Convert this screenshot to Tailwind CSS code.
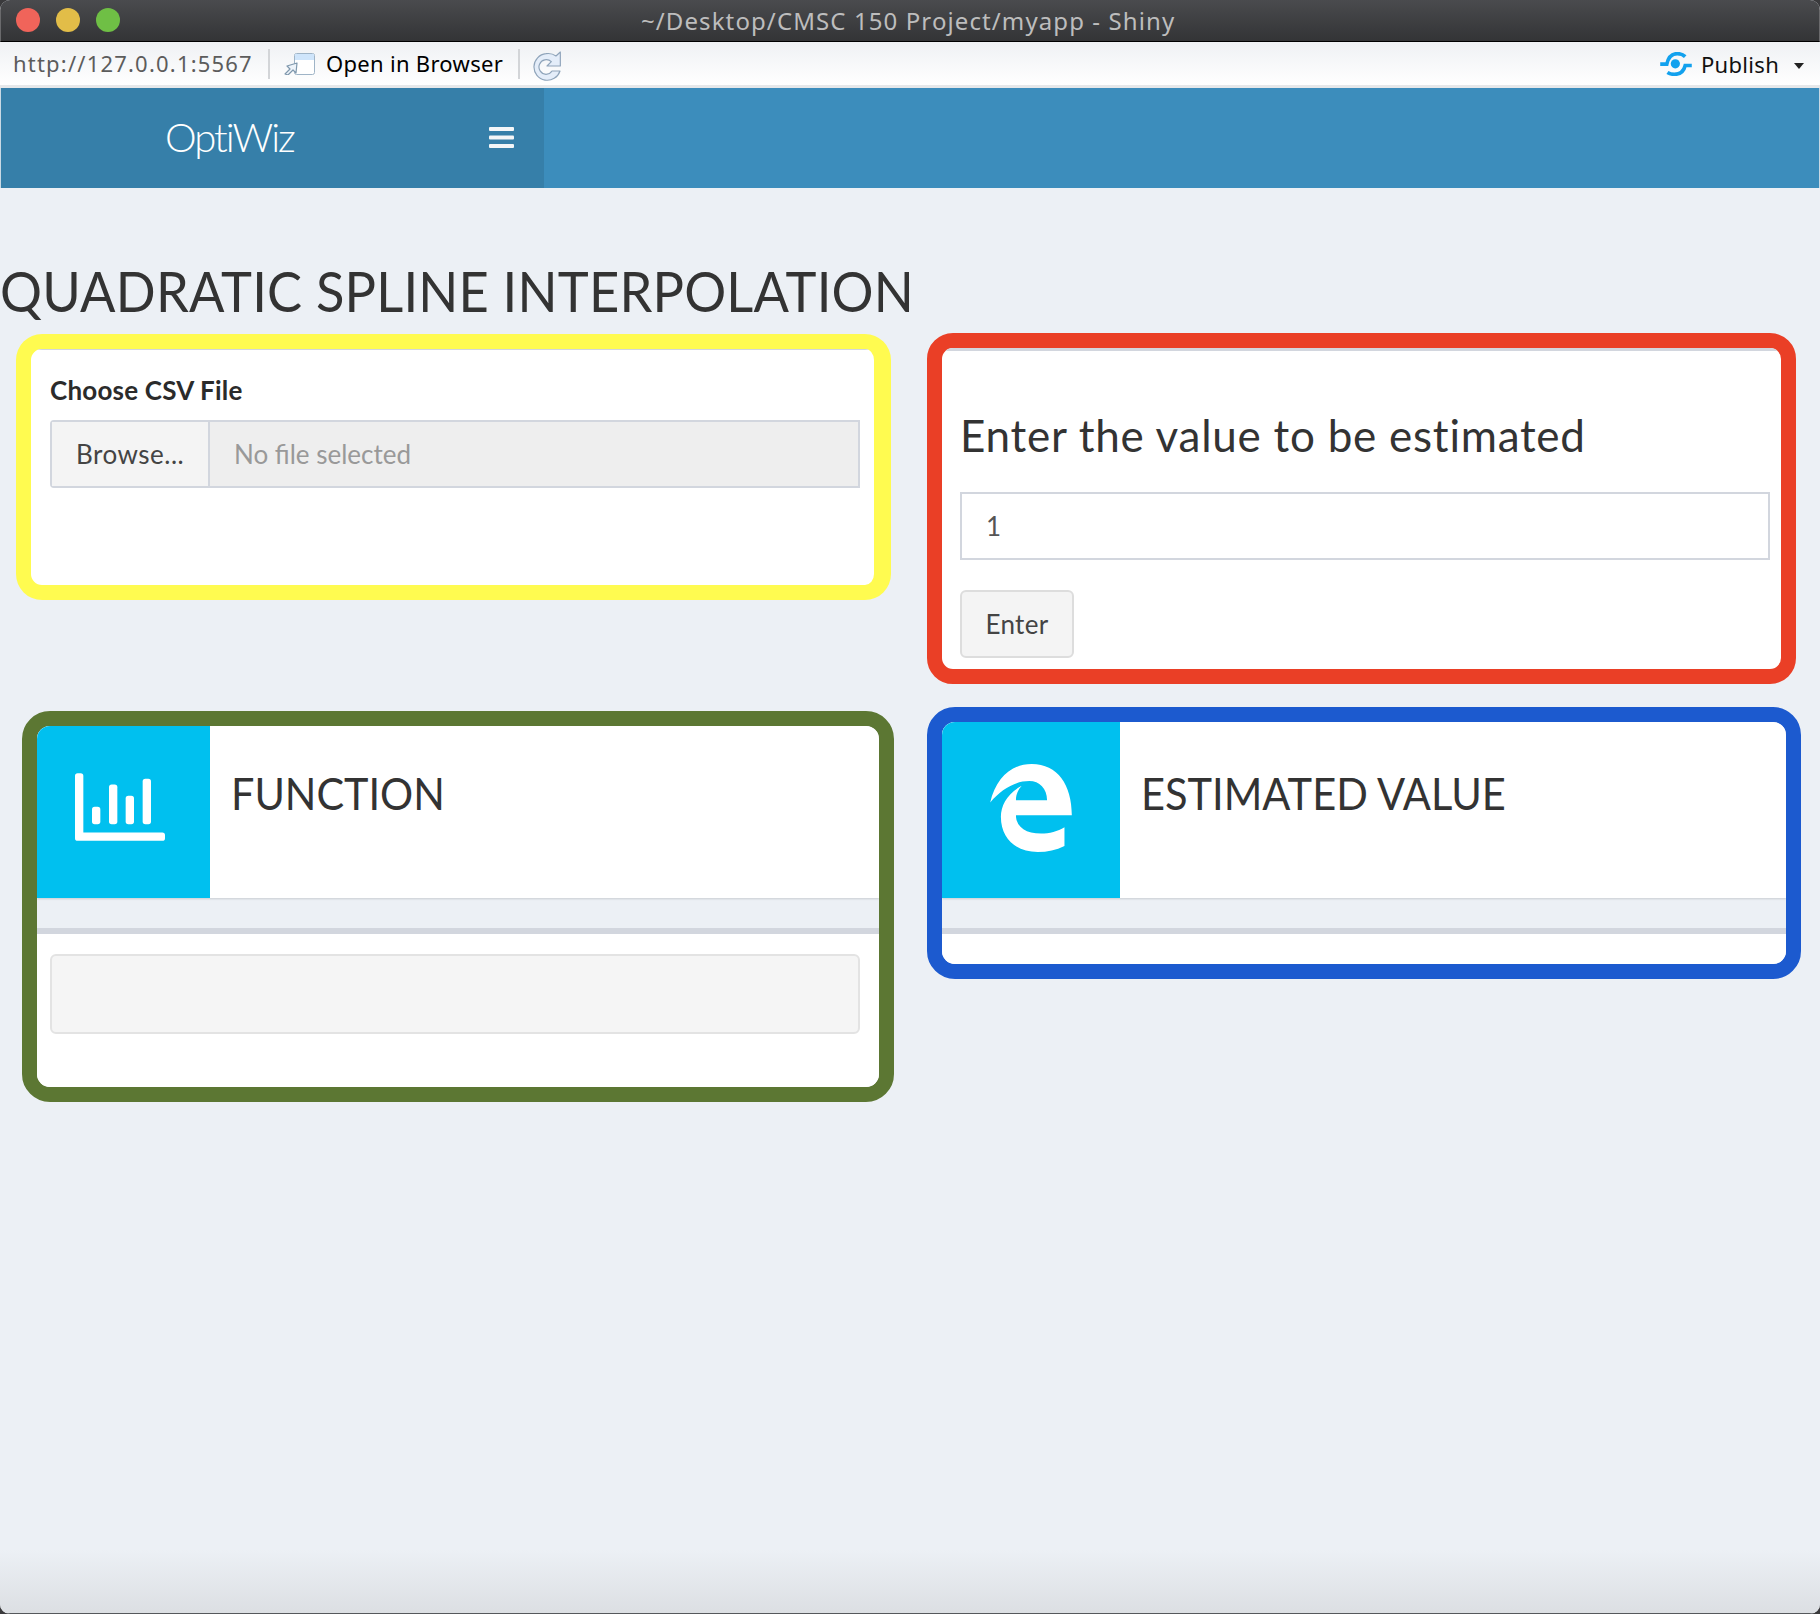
<!DOCTYPE html>
<html lang="en">
<head>
  <meta charset="UTF-8" />
  <title>~/Desktop/CMSC 150 Project/myapp - Shiny</title>
  <script src="https://cdn.jsdelivr.net/npm/@tailwindcss/browser@4"></script>
</head>
<body class="bg-[#3a3a3c] overflow-hidden">
  <div class="w-[1820px] h-[1614px] flex flex-col rounded-[10px] overflow-hidden bg-[#ecf0f5] font-['Lato',sans-serif] text-[#333]">

    <!-- window title bar -->
    <div class="h-[42px] shrink-0 flex items-center relative bg-gradient-to-b from-[#4a4b4e] to-[#333436] border-b border-b-black border-x border-x-[#6a6a6c]">
      <div class="flex gap-[16px] pl-[15px] mt-[-1px]">
        <span class="w-[24px] h-[24px] rounded-full bg-[#f0645a]"></span>
        <span class="w-[24px] h-[24px] rounded-full bg-[#e2bd48]"></span>
        <span class="w-[24px] h-[24px] rounded-full bg-[#6fbf45]"></span>
      </div>
      <div class="absolute left-[640px] top-[5px] font-['Noto_Sans',sans-serif] text-[24px] leading-[32px] tracking-[1.1px] text-[#bdbdbd] whitespace-nowrap">~/Desktop/CMSC 150 Project/myapp - Shiny</div>
    </div>

    <!-- toolbar -->
    <div class="h-[46px] shrink-0 flex items-center bg-gradient-to-b from-[#eff1f4] to-white border-b-[3px] border-[#e6e8ea] font-['Noto_Sans',sans-serif] text-[22px]">
      <span class="ml-[13px] w-[255px] text-[#5c5c5c] tracking-[1.2px] whitespace-nowrap">http://127.0.0.1:5567</span>
      <span class="w-[2px] h-[30px] bg-[#d3d5d8]"></span>
      <svg class="ml-[14px] w-[31px] h-[22px]" viewBox="0 0 31 22">
        <rect x="10.5" y="0.5" width="20" height="21" rx="2" fill="#fff" stroke="#9fb4c7"/>
        <path d="M11 1h19v6H11z" fill="#cfe5fb"/>
        <path d="M1 21l5-5-3-3 10-3-1 10-3-3-5 5z" fill="#eef4fa" stroke="#7f98ad" stroke-width="1.2" stroke-linejoin="round"/>
      </svg>
      <span class="ml-[11px] w-[192px] text-black tracking-[0.3px] whitespace-nowrap">Open in Browser</span>
      <span class="w-[2px] h-[30px] bg-[#d3d5d8]"></span>
      <svg class="ml-[12px] mt-[5px] w-[30px] h-[30px]" viewBox="0 0 90 90">
        <path d="M85 3V45H45L58 32A22 22 0 1 0 42 70A22 22 0 0 0 60 60H84A40 40 0 1 1 42 8A40 40 0 0 1 72 15Z" fill="#e4edf9" stroke="#8fa4ba" stroke-width="3.500" stroke-linejoin="round"/>
      </svg>
      <svg class="ml-[1098px] w-[32px] h-[24px]" viewBox="780 162 96 73" fill="none" stroke="#12a1ee" stroke-width="11">
        <path d="M780 199H800C804 180 815 167 832 167C842 167 850 170 856 176"/>
        <path d="M876 203H856C852 220 840 230 823 230C815 230 808 228 802 224"/>
        <circle cx="826" cy="198" r="14" fill="#12a1ee" stroke="none"/>
      </svg>
      <span class="ml-[9px] mt-[2px] w-[75px] text-[#111] tracking-[0.3px]">Publish</span>
      <span class="ml-[18px] w-0 h-0 border-x-[5px] border-x-transparent border-t-[6px] border-t-[#222] mt-[5px]"></span>
    </div>

    <!-- app header -->
    <header class="h-[100px] shrink-0 flex bg-[#3c8dbc] border-x border-[#c9d9e4]">
      <div class="w-[543px] flex items-center bg-[#367fa9] text-white">
        <span class="ml-[164px] mb-[2px] w-[324px] text-[40px] font-light tracking-[-2px]">OptiWiz</span>
        <svg class="w-[25px] h-[21px] mb-[2px]" viewBox="0 0 25 21" fill="#f3f6f8">
          <rect width="25" height="4" rx="1"/><rect y="8.500" width="25" height="4" rx="1"/><rect y="17" width="25" height="4" rx="1"/>
        </svg>
      </div>
    </header>

    <main class="flex-1 relative">
      <div class="h-[146px] pt-[71px]">
        <h1 class="origin-left scale-x-[0.937] text-[56px] leading-[64px] whitespace-nowrap tracking-[0.2px]">QUADRATIC SPLINE INTERPOLATION</h1>
      </div>

      <div class="flex">
        <!-- left column -->
        <div class="w-[927px] shrink-0">
          <section class="ml-[16px] w-[875px] h-[266px] border-[15px] border-r-[17px] border-[#fffb50] rounded-[26px] overflow-hidden bg-white">
            <div class="h-full border-t-[1px] border-[#d2d6de] pt-[28px] pl-[19px]">
              <label class="block text-[26px] leading-[24px] tracking-[0.2px] font-bold text-[#2b2b2b]">Choose CSV File</label>
              <div class="mt-[18px] w-[810px] h-[68px] flex border-2 border-[#d2d6de] rounded-l-[4px] text-[26px]">
                <span class="w-[158px] flex items-center pl-[24px] bg-[#f4f4f4] border-r-2 border-[#d2d6de] text-[#444] tracking-[0.5px]">Browse...</span>
                <span class="flex-1 flex items-center pl-[24px] bg-[#eeeeee] text-[#999]">No file selected</span>
              </div>
            </div>
          </section>

          <section class="mt-[111px] ml-[22px] w-[872px] h-[391px] border-[15px] border-[#5c7733] rounded-[28px] overflow-hidden bg-[#ecf0f5]">
            <div class="h-[172px] flex bg-white shadow-[0_1px_2px_rgba(0,0,0,0.15)]">
              <div class="w-[173px] flex items-center justify-center bg-[#00c0ef]">
                <svg class="w-[90px] h-[68px] mb-[11px] mr-[7px]" viewBox="225 217 270 203" fill="#fff">
                  <path d="M225 225a8 8 0 0 1 8-8h9a8 8 0 0 1 8 8v170h237a8 8 0 0 1 8 8v9a8 8 0 0 1-8 8H233a8 8 0 0 1-8-8z"/>
                  <rect x="276" y="318" width="25" height="52" rx="8"/>
                  <rect x="327" y="251" width="25" height="119" rx="8"/>
                  <rect x="377" y="285" width="25" height="85" rx="8"/>
                  <rect x="428" y="234" width="25" height="136" rx="8"/>
                </svg>
              </div>
              <h2 class="ml-[21px] mt-[45px] origin-left scale-x-[0.94] text-[44px] leading-[44px] h-[44px] whitespace-nowrap">FUNCTION</h2>
            </div>
            <div class="h-[30px]"></div>
            <div class="h-[6px] bg-[#d2d6de]"></div>
            <div class="bg-white h-[153px] pl-[13px] pt-[20px]">
              <div class="w-[810px] h-[80px] bg-[#f5f5f5] border-2 border-[#e3e3e3] rounded-[6px]"></div>
            </div>
          </section>
        </div>

        <!-- right column -->
        <div class="flex-1">
          <section class="-mt-px w-[869px] h-[351px] border-[15px] border-[#ea3f26] rounded-[26px] overflow-hidden bg-white">
            <div class="h-full border-t-[3px] border-[#d2d6de] pl-[18px]">
              <h3 class="mt-[62px] text-[44px] leading-[44px] tracking-[0.75px] whitespace-nowrap">Enter the value to be estimated</h3>
              <div class="mt-[35px] w-[810px] h-[68px] flex items-center pl-[24px] border-2 border-[#d2d6de] text-[26px] text-[#555]">1</div>
              <button class="mt-[30px] w-[114px] h-[68px] bg-[#f4f4f4] border-2 border-[#ddd] rounded-[6px] text-[26px] tracking-[0.3px] text-[#444]">Enter</button>
            </div>
          </section>

          <section class="mt-[23px] w-[874px] h-[272px] border-[15px] border-[#1c5acf] rounded-[28px] overflow-hidden bg-[#ecf0f5]">
            <div class="h-[176px] flex bg-white shadow-[0_1px_2px_rgba(0,0,0,0.15)]">
              <div class="w-[178px] flex items-center justify-center bg-[#00c0ef]">
                <svg class="w-[82px] h-[88px] mb-[4px] mr-[1px]" viewBox="268 217 244 263" fill="#fff">
                  <path d="M268 332C285 260 330 217 392 217C470 217 512 280 512 370H345C345 405 375 425 420 425C445 425 470 418 490 406V462C465 474 440 480 410 480C345 480 300 440 300 375C300 340 320 305 362 282C350 295 345 310 345 325H438C438 290 415 268 385 268C340 268 300 295 268 332Z"/>
                </svg>
              </div>
              <h2 class="ml-[21px] mt-[49px] origin-left scale-x-[0.945] text-[44px] leading-[44px] h-[44px] whitespace-nowrap">ESTIMATED VALUE</h2>
            </div>
            <div class="h-[30px]"></div>
            <div class="h-[6px] bg-[#d2d6de]"></div>
            <div class="h-[30px] bg-white"></div>
          </section>
        </div>
      </div>

      <!-- window shadow at the bottom edge -->
      <div class="absolute bottom-0 left-0 right-0 h-[64px] bg-gradient-to-b from-transparent to-[#dcdfe3] border-b border-[#55585c]"></div>
    </main>
  </div>
</body>
</html>
